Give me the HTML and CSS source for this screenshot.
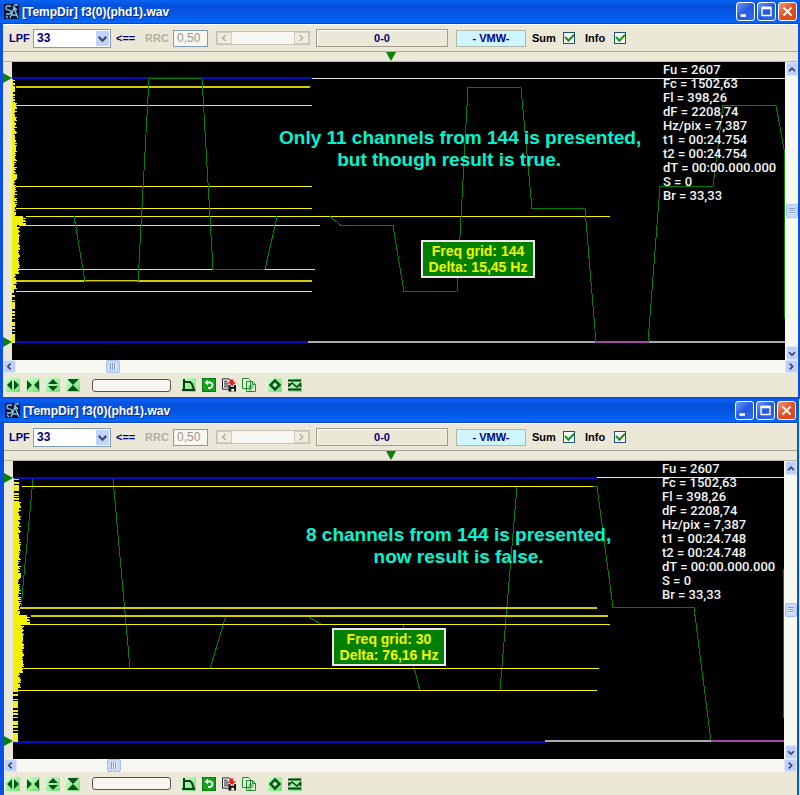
FILE: index.html
```html
<!DOCTYPE html>
<html lang="en">
<head>
<meta charset="utf-8">
<title>[TempDir] f3(0)(phd1).wav</title>
<link rel="stylesheet" href="styles.css">
</head>
<body>
<svg class="defs" aria-hidden="true">
  <defs>
    <linearGradient id="tile" x1="0" y1="0" x2="1" y2="1"><stop offset="0" stop-color="#d4ffd0"/><stop offset="1" stop-color="#6be070"/></linearGradient>
    <symbol id="app" viewBox="0 0 16 16"><rect width="15" height="15" fill="#06153f"/><path d="M7 2H3L2 3v2l5 2v2L5 10H2M6 14l4-10 4 10M7 11h6M10 1h4M2 12l2 2M9 2l4 4" fill="none" stroke="#8fc9d8" stroke-width="1.3"/></symbol>
    <symbol id="min" viewBox="0 0 19 19"><path d="M4 14h6" stroke="#fff" stroke-width="3"/></symbol>
    <symbol id="max" viewBox="0 0 19 19"><path d="M4.500 5v9h10V5M4 5.500h11" fill="none" stroke="#fff" stroke-width="1.500"/><path d="M4 5.500h11" stroke="#fff" stroke-width="3"/></symbol>
    <symbol id="close" viewBox="0 0 19 19"><path d="M5 5l9 9M14 5l-9 9" stroke="#fff" stroke-width="2.200"/></symbol>
    <symbol id="down" viewBox="0 0 12 12"><path d="M2.500 4.500L6 8l3.500-3.500" fill="none" stroke="currentColor" stroke-width="2"/></symbol>
    <symbol id="up" viewBox="0 0 12 12"><path d="M2.500 8L6 4.500 9.500 8" fill="none" stroke="currentColor" stroke-width="2"/></symbol>
    <symbol id="left" viewBox="0 0 12 12"><path d="M8 2.500L4.500 6 8 9.500" fill="none" stroke="currentColor" stroke-width="2"/></symbol>
    <symbol id="right" viewBox="0 0 12 12"><path d="M4.500 2.500L8 6 4.500 9.500" fill="none" stroke="currentColor" stroke-width="2"/></symbol>
    <symbol id="grow-x" viewBox="0 0 14 14"><rect width="14" height="14" fill="url(#tile)"/><path d="M6 2v10L1 7zM8 2v10l5-5z" fill="#06551a"/></symbol>
    <symbol id="shrink-x" viewBox="0 0 14 14"><rect width="14" height="14" fill="url(#tile)"/><path d="M1 2v10l5-5zM13 2v10L8 7z" fill="#06551a"/></symbol>
    <symbol id="grow-y" viewBox="0 0 14 14"><rect width="14" height="14" fill="url(#tile)"/><path d="M2 6h10L7 1zM2 8h10l-5 5z" fill="#06551a"/></symbol>
    <symbol id="shrink-y" viewBox="0 0 14 14"><rect width="14" height="14" fill="url(#tile)"/><path d="M2 1h10v1L7 7 2 2zM2 13h10v-1L7 7l-5 5z" fill="#06551a"/></symbol>
    <symbol id="filter" viewBox="0 0 14 14"><rect width="14" height="14" fill="url(#tile)"/><path d="M2 1v11M0 12h13M2 4h6l2 2 2 6" fill="none" stroke="#053f14" stroke-width="2"/></symbol>
    <symbol id="undo" viewBox="0 0 14 14"><rect x=".5" y=".5" width="13" height="13" fill="#12a51b" stroke="#087a10"/><path d="M5 4.500h3.500Q10.500 5 10.500 7T8.500 10H6" fill="none" stroke="#fff" stroke-width="1.800"/><path d="M2.500 4.500L6 1.800v5.400z" fill="#fff"/></symbol>
    <symbol id="save" viewBox="0 0 15 14"><path d="M.5.5h7l2 2v9h-9z" fill="#fff" stroke="#111"/><path d="M2 3h4M2 5h6M2 7h5M2 9h5" stroke="#111"/><path d="M7 7h8v7H7z" fill="#111"/><path d="M9 7h4v2H9zM10 11h3v3h-3z" fill="#eee"/><path d="M8 1h4v3h3l-4 4-4-4h1z" fill="#f01818"/></symbol>
    <symbol id="copy" viewBox="0 0 14 14"><path d="M.5.5h6l2 2v8h-8zM4.500 3.500h6l3 3v7h-9z" fill="#e2fbdc" stroke="#1d8a2c"/><path d="M10.500 3.500v3h3M6.500 8h5M6.500 10h5M6.500 12h3" fill="none" stroke="#1d8a2c"/></symbol>
    <symbol id="diamond" viewBox="0 0 14 14"><rect width="14" height="14" fill="url(#tile)"/><path d="M7 2.500L11.500 7 7 11.500 2.500 7z" fill="#c5f8bd" stroke="#06551a" stroke-width="2.500"/></symbol>
    <symbol id="wave" viewBox="0 0 14 14"><rect width="14" height="14" fill="url(#tile)"/><path d="M0 2.500h13M0 11.500h13" stroke="#053f14" stroke-width="2"/><path d="M1 8l3-3 5 4 4-4M1 5v4M12.500 5v4" fill="none" stroke="#053f14" stroke-width="1.500"/></symbol>
  </defs>
</svg>

<main>
<section class="window">
  <header class="titlebar">
    <svg class="app-icon"><use href="#app"/></svg>
    <h1>[TempDir] f3(0)(phd1).wav</h1>
    <button class="cap" aria-label="Minimize"><svg><use href="#min"/></svg></button>
    <button class="cap" aria-label="Maximize"><svg><use href="#max"/></svg></button>
    <button class="cap cap-close" aria-label="Close"><svg><use href="#close"/></svg></button>
  </header>
  <div class="toolbar">
    <label class="navy" for="lpf1">LPF</label>
    <span class="combo"><select id="lpf1"><option>33</option></select><svg><use href="#down"/></svg></span>
    <span class="navy arrow">&lt;==</span>
    <label class="muted" for="rrc1">RRC</label>
    <input class="rrc" id="rrc1" type="text" value="0,50" disabled>
    <div class="mini-scroll"><button disabled aria-label="Decrease"><svg><use href="#left"/></svg></button><button disabled aria-label="Increase"><svg><use href="#right"/></svg></button></div>
    <button class="range">0-0</button>
    <button class="vmw">- VMW-</button>
    <label class="check" for="sum1">Sum</label><input id="sum1" type="checkbox" checked>
    <label class="check" for="info1">Info</label><input id="info1" type="checkbox" checked>
  </div>
  <div class="ruler"><svg viewBox="0 0 10 10"><path d="M0 0h10L5 9z"/></svg></div>
  <div class="view">
    <svg class="gutter"><path d="M0 11v10l9-5zM0 275v10l9-5z"/></svg>
    <div class="plot">
      <svg class="chart">
        <path class="white" d="M300 16H1600"/>
        <path class="silver" d="M296 280H584M637 280H1600"/>
        <path class="pink" d="M584 280H637"/>
        <path class="blue" d="M0 16H300M0 280H296"/>
        <path class="yellow" d="M4 43H300M4 124H300M4 146H300M14 154H598M7 163H308M7 207H303M4 229H300"/>
        <path class="amber" d="M4 25H298M4 219H300"/>
        <path class="curve" d="M62 154L73 219H126L137 16H190L201 207H253L265 154M318 154L329 163H381L392 229H445L456 25H509L520 146H573L584 280M636 280L648 124H701L711 43H764L773 92"/>
        <path class="curve" d="M772 92V256"/>
        <path class="spectrum" data-top="17" data-bottom="280" data-burst="154" data-base="3"/>
      </svg>
      <p class="note note-a">Only 11 channels from 144 is presented,<br><span class="lead">but though result is true.</span></p>
      <p class="grid-tag tag-a">Freq grid: 144<br>Delta: 15,45 Hz</p>
      <div class="readout">Fu = 2607<br>Fc = 1502,63<br>Fl = 398,26<br>dF = 2208,74<br>Hz/pix = 7,387<br>t1 = 00:24.754<br>t2 = 00:24.754<br>dT = 00:00.000.000<br>S = 0<br>Br = 33,33</div>
    </div>
    <div class="vscroll"><button aria-label="Scroll up"><svg><use href="#up"/></svg></button><span class="thumb"></span><button aria-label="Scroll down"><svg><use href="#down"/></svg></button></div>
  </div>
  <div class="hscroll"><button aria-label="Scroll left"><svg><use href="#left"/></svg></button><span class="thumb"></span><button aria-label="Scroll right"><svg><use href="#right"/></svg></button></div>
  <footer class="tools">
    <button aria-label="Stretch time"><svg><use href="#grow-x"/></svg></button>
    <button aria-label="Shrink time"><svg><use href="#shrink-x"/></svg></button>
    <button aria-label="Stretch frequency"><svg><use href="#grow-y"/></svg></button>
    <button aria-label="Shrink frequency"><svg><use href="#shrink-y"/></svg></button>
    <input type="text" aria-label="Progress" readonly>
    <button aria-label="Filter"><svg><use href="#filter"/></svg></button>
    <button aria-label="Undo"><svg><use href="#undo"/></svg></button>
    <button aria-label="Save"><svg><use href="#save"/></svg></button>
    <button aria-label="Copy"><svg><use href="#copy"/></svg></button>
    <button class="apart" aria-label="Marker"><svg><use href="#diamond"/></svg></button>
    <button aria-label="Wave"><svg><use href="#wave"/></svg></button>
  </footer>
</section>

<section class="window second">
  <header class="titlebar">
    <svg class="app-icon"><use href="#app"/></svg>
    <h1>[TempDir] f3(0)(phd1).wav</h1>
    <button class="cap" aria-label="Minimize"><svg><use href="#min"/></svg></button>
    <button class="cap" aria-label="Maximize"><svg><use href="#max"/></svg></button>
    <button class="cap cap-close" aria-label="Close"><svg><use href="#close"/></svg></button>
  </header>
  <div class="toolbar">
    <label class="navy" for="lpf2">LPF</label>
    <span class="combo"><select id="lpf2"><option>33</option></select><svg><use href="#down"/></svg></span>
    <span class="navy arrow">&lt;==</span>
    <label class="muted" for="rrc2">RRC</label>
    <input class="rrc" id="rrc2" type="text" value="0,50" disabled>
    <div class="mini-scroll"><button disabled aria-label="Decrease"><svg><use href="#left"/></svg></button><button disabled aria-label="Increase"><svg><use href="#right"/></svg></button></div>
    <button class="range">0-0</button>
    <button class="vmw">- VMW-</button>
    <label class="check" for="sum2">Sum</label><input id="sum2" type="checkbox" checked>
    <label class="check" for="info2">Info</label><input id="info2" type="checkbox" checked>
  </div>
  <div class="ruler"><svg viewBox="0 0 10 10"><path d="M0 0h10L5 9z"/></svg></div>
  <div class="view">
    <svg class="gutter"><path d="M0 12v10l9-5zM0 275v10l9-5z"/></svg>
    <div class="plot">
      <svg class="chart">
        <path class="curve" d="M8 146L20 17M100 17L117 207M197 207L213 154M293 154L309 163H390L407 229M487 229L504 25M580 25H584L600 146H681L698 280"/>
        <path class="curve" d="M770 107V256"/>
        <path class="white" d="M584 16H1600"/>
        <path class="silver" d="M532 280H698"/>
        <path class="pink" d="M698 280H1600"/>
        <path class="blue" d="M0 17H584M0 281H532"/>
        <path class="yellow" d="M9 25H580M7 163H597M7 207H586M5 229H584"/>
        <path class="amber" d="M7 147H584M18 155H595"/>
        <path class="spectrum" data-top="17" data-bottom="280" data-burst="154" data-base="6"/>
      </svg>
      <p class="note note-b">8 channels from 144 is presented,<br>now result is false.</p>
      <p class="grid-tag tag-b">Freq grid: 30<br>Delta: 76,16 Hz</p>
      <div class="readout">Fu = 2607<br>Fc = 1502,63<br>Fl = 398,26<br>dF = 2208,74<br>Hz/pix = 7,387<br>t1 = 00:24.748<br>t2 = 00:24.748<br>dT = 00:00.000.000<br>S = 0<br>Br = 33,33</div>
    </div>
    <div class="vscroll"><button aria-label="Scroll up"><svg><use href="#up"/></svg></button><span class="thumb"></span><button aria-label="Scroll down"><svg><use href="#down"/></svg></button></div>
  </div>
  <div class="hscroll"><button aria-label="Scroll left"><svg><use href="#left"/></svg></button><span class="thumb"></span><button aria-label="Scroll right"><svg><use href="#right"/></svg></button></div>
  <footer class="tools">
    <button aria-label="Stretch time"><svg><use href="#grow-x"/></svg></button>
    <button aria-label="Shrink time"><svg><use href="#shrink-x"/></svg></button>
    <button aria-label="Stretch frequency"><svg><use href="#grow-y"/></svg></button>
    <button aria-label="Shrink frequency"><svg><use href="#shrink-y"/></svg></button>
    <input type="text" aria-label="Progress" readonly>
    <button aria-label="Filter"><svg><use href="#filter"/></svg></button>
    <button aria-label="Undo"><svg><use href="#undo"/></svg></button>
    <button aria-label="Save"><svg><use href="#save"/></svg></button>
    <button aria-label="Copy"><svg><use href="#copy"/></svg></button>
    <button class="apart" aria-label="Marker"><svg><use href="#diamond"/></svg></button>
    <button aria-label="Wave"><svg><use href="#wave"/></svg></button>
  </footer>
</section>
</main>
<script src="spectrum.js"></script>
</body>
</html>
```
FILE: styles.css
```css
* { box-sizing: border-box; }
body { margin: 0; background: #ece9d8; font: bold 11px/14px "Liberation Sans", Arial, sans-serif; color: #000; }
button, input, select { font: inherit; margin: 0; padding: 0; border-radius: 0; }
svg { display: block; }
.defs { position: absolute; width: 0; height: 0; }

.window { background: #ebe8d7; border: solid #0a4fe6; border-width: 0 2px 2px 3px; }
.window.second { border-width: 0 2px 0 4px; margin-right: 1px; }

.titlebar { display: flex; align-items: center; gap: 2px; height: 24px; margin: 0 -2px 0 -3px; padding: 0 3px 0 4px; border-bottom: 1px solid #0a46c4; background: linear-gradient(#0a62f0, #0450dc 25%, #0556e6 60%, #0468fb); }
.second .titlebar { margin-left: -4px; padding-left: 5px; }
.app-icon { width: 16px; height: 16px; }
.titlebar h1 { flex: 1; margin: 0; color: #fff; font-size: 12px; line-height: 16px; text-shadow: 1px 1px #0a2a80; }
.cap { width: 19px; height: 19px; border: 1px solid #fff; border-radius: 3px; background: linear-gradient(135deg, #6d97f5, #2459dd 50%, #2c6af0); }
.cap svg { width: 17px; height: 17px; }
.cap-close { background: linear-gradient(135deg, #f19a7c, #df4f26 50%, #d5481f); }

.toolbar { display: flex; align-items: center; height: 28px; padding-left: 6px; border-top: 1px solid #fff; border-bottom: 1px solid #aaa797; }
.second .toolbar { padding-left: 5px; }
.navy { color: #00007b; width: 24px; }
.combo { position: relative; width: 78px; }
.combo select { display: block; width: 100%; height: 19px; padding-left: 3px; appearance: none; background: #fff; border: 1px solid #7f9db9; color: #00007b; font-size: 12px; }
.combo svg { position: absolute; right: 2px; top: 2px; width: 13px; height: 15px; background: #c3d3fb; color: #3c4c70; pointer-events: none; }
.arrow { width: 29px; margin-left: 5px; }
.muted { width: 28px; color: #b3b0a1; }
.rrc { width: 35px; height: 17px; padding-left: 3px; border: 1px solid #7f9db9; background: #f8f7f0; color: #9c998b; font-weight: normal; font-size: 12px; }
.mini-scroll { display: flex; justify-content: space-between; width: 94px; height: 14px; margin-left: 8px; border: 1px solid #c6c3b4; background: #f7f6f0; }
.mini-scroll button { width: 15px; height: 12px; border: 1px solid #d2cfc0; background: #efede0; color: #b7b4a5; }
.mini-scroll svg { width: 12px; height: 10px; }
.range { width: 132px; height: 18px; margin-left: 6px; border: 1px solid #a09d8e; background: #ebe8d7; color: #00007b; box-shadow: inset 1px 1px #fff; }
.vmw { width: 70px; height: 17px; margin-left: 8px; border: 1px solid #b4b6aa; background: #cff5fd; color: #00007b; }
.check { width: 31px; margin-left: 6px; }
.check:last-of-type { width: 29px; margin-left: 10px; }
.toolbar input[type="checkbox"] { display: grid; place-items: center; width: 12px; height: 12px; appearance: none; border: 1px solid #1c5180; background: #fff; }
.toolbar input[type="checkbox"]:checked::before { content: ""; width: 7px; height: 4px; border: solid #159315; border-width: 0 0 2px 2px; transform: rotate(-45deg) translate(1px, -1px); }

.ruler { height: 10px; padding-left: 383px; border-bottom: 1px solid #b9b7a8; }
.second .ruler { padding-left: 382px; }
.ruler svg { width: 10px; height: 10px; fill: #078207; }

.view { display: grid; grid-template-columns: 9px minmax(0, 1fr) 13px; height: 298px; }
.gutter { width: 9px; height: 298px; fill: #078207; }
.plot { position: relative; overflow: hidden; background: #000; }
.chart { width: 100%; height: 298px; shape-rendering: crispEdges; }
.chart path { fill: none; stroke-width: 1px; transform: translateY(0.5px); }
.chart .curve { stroke: #008000; }
.chart .white { stroke: #e8e7e8; }
.chart .silver, .chart .pink, .chart .blue, .chart .amber { stroke-width: 2px; transform: none; }
.chart .silver { stroke: #acabac; }
.chart .pink { stroke: #a846a8; }
.chart .blue { stroke: #0a0ac4; }
.chart .yellow { stroke: #f6f600; }
.chart .amber { stroke: #d2cc00; }
.chart .spectrum { stroke: #f2f200; }

.note { position: absolute; margin: 0; color: #00f5d2; font-size: 19px; line-height: 22px; text-align: center; white-space: nowrap; }
.note-a { left: 267px; top: 65px; }
.note-b { left: 293px; top: 63px; }
.lead { padding-right: 22px; }
.grid-tag { position: absolute; width: 114px; margin: 0; padding: 1px 0; border: 2px solid #f0e4f0; background: #008000; color: #f6f600; font-size: 14px; line-height: 16px; text-align: center; white-space: nowrap; }
.tag-a { left: 409px; top: 178px; }
.tag-b { left: 319px; top: 167px; }
.readout { position: absolute; right: 0; top: 1px; width: 122px; color: #f4f4f4; font-family: Roboto, "Liberation Sans", sans-serif; font-weight: 500; font-size: 13px; white-space: nowrap; }

.vscroll, .hscroll { display: flex; justify-content: space-between; background: #f8f8f3; color: #35466e; }
.vscroll { flex-direction: column; padding-left: 1px; }
.hscroll { height: 13px; }
.vscroll button, .hscroll button { border: 1px solid #dce6fd; background: #bfd0f8; color: inherit; border-radius: 2px; }
.vscroll button { height: 14px; }
.hscroll button { width: 13px; }
.vscroll button svg, .hscroll button svg { width: 10px; height: 11px; }
.thumb { border: 1px solid #a9c0f2; border-radius: 2px; background: #cbdafc; }
.vscroll .thumb { height: 14px; padding: 3px 2px; }
.hscroll .thumb { width: 14px; margin-left: 90px; margin-right: auto; padding: 2px 3px; }
.thumb::before { content: ""; display: block; height: 100%; }
.hscroll .thumb::before { background: repeating-linear-gradient(90deg, #7d9ce2 0 1px, #e8effe 1px 2px); }
.vscroll .thumb::before { background: repeating-linear-gradient(#7d9ce2 0 1px, #e8effe 1px 2px); }

.tools { display: flex; align-items: center; gap: 6px; height: 24px; padding-left: 3px; }
.second .tools { height: 23px; padding-left: 2px; }
.tools button { width: 14px; height: 14px; border: 0; background: none; }
.tools svg { width: 14px; height: 14px; }
.tools input { width: 79px; height: 13px; margin: 0 5px 0 6px; border: 1px solid #55544e; border-radius: 3px; background: #f7f6f1; }
.tools .apart { margin-left: 6px; }
```
FILE: spectrum.js
```js
// Horizontal power bars along the left edge of each plot, widest at the burst row.
document.querySelectorAll('.spectrum').forEach(function (path) {
  var top = +path.dataset.top, bottom = +path.dataset.bottom;
  var burst = +path.dataset.burst, base = +path.dataset.base;
  var seed = 7, d = '';
  function rand() { seed = (seed * 16807) % 2147483647; return seed / 2147483647; }
  for (var y = top; y <= bottom; y++) {
    var r = rand(), len = base - 1 + Math.round(r * 3);
    if (y < top + 24) len = r < 0.5 ? 1 : base;
    if (y > burst + 10 && y < burst + 58) len = base + 3 + Math.round(r * 2);
    if (y >= burst && y < burst + 9) len = base + 8 + Math.round(r * 3);
    if (y > burst + 76) len = r < 0.3 ? 0 : Math.max(base - 1, 3);
    d += 'M0 ' + y + 'h' + len;
  }
  path.setAttribute('d', d);
});
```
